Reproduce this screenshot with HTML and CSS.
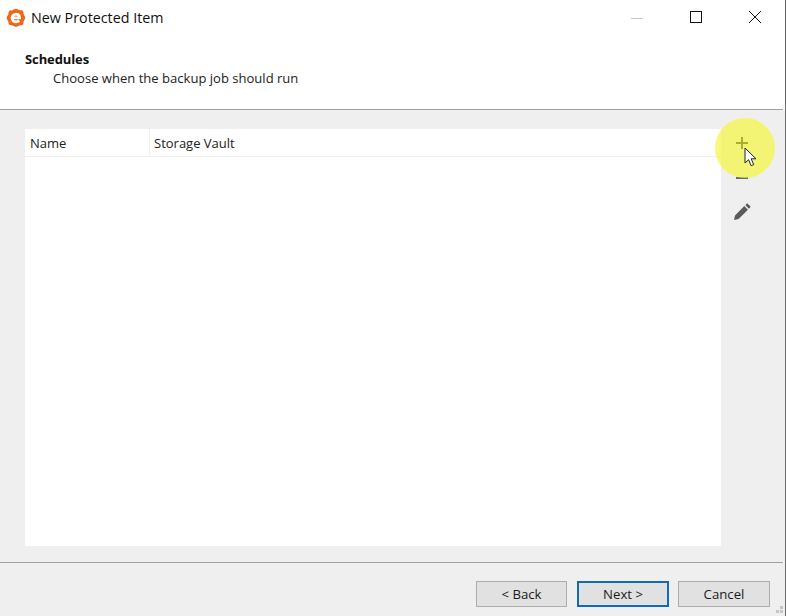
FILE: index.html
```html
<!DOCTYPE html>
<html lang="en">
<head>
<meta charset="utf-8">
<title>New Protected Item</title>
<link rel="stylesheet" href="styles.css">
</head>
<body>
<div class="window">
  <header class="titlebar">
    <svg class="app-icon" width="20" height="20" viewBox="0 0 20 20">
      <path fill="#ee661a" d="M10 .8c1.500 0 2.300 1 3.300 1.300 1.200.3 2.500-.1 3.500.8.900.9.500 2.200.9 3.300.3 1 1.500 2 1.500 3.600s-1.100 2.500-1.500 3.600c-.4 1.100 0 2.400-.9 3.300-1 .9-2.300.4-3.500.8-1 .3-1.800 1.300-3.300 1.300s-2.400-1-3.500-1.300c-1.100-.3-2.300 0-3.200-.8-1-.9-.6-2.200-1-3.300C1.900 12.400.7 11.500.7 10s1.200-2.500 1.600-3.700c.4-1.100 0-2.400 1-3.300.9-.9 2.200-.5 3.200-.8C7.600 1.800 8.500.8 10 .8z"/>
      <path fill="none" stroke="#fff" stroke-width="2.800" d="M6 9.900h7.600c0-2.400-1.600-3.800-3.600-3.800-2.200 0-3.900 1.700-3.900 3.900s1.700 3.900 3.900 3.900c1.300 0 2.300-.4 3.200-1.300"/>
    </svg>
    <span class="title">New Protected Item</span>
    <div class="caption-buttons">
      <svg class="cap-min" width="14" height="14" viewBox="0 0 14 14"><path d="M1 8.500h12" stroke="#c8c8c8" stroke-width="1"/></svg>
      <svg class="cap-max" width="14" height="14" viewBox="0 0 14 14"><rect x="1.500" y="1.500" width="11" height="11" fill="none" stroke="#111" stroke-width="1"/></svg>
      <svg class="cap-close" width="14" height="14" viewBox="0 0 14 14"><path d="M1 1l12 12M13 1L1 13" stroke="#111" stroke-width="1" fill="none"/></svg>
    </div>
  </header>
  <section class="heading">
    <h1 class="heading-title">Schedules</h1>
    <p class="heading-sub">Choose when the backup job should run</p>
  </section>
  <div class="rule"></div>
  <main class="content">
    <div class="table">
      <div class="table-head">
        <div class="col col-name">Name</div>
        <div class="col col-vault">Storage Vault</div>
      </div>
    </div>
    <div class="tools">
      <button class="tool" aria-label="Add">
        <svg width="14" height="14" viewBox="0 0 14 14"><path d="M7 1v12M1 7h12" stroke="#000" stroke-width="2" shape-rendering="crispEdges"/></svg>
      </button>
      <button class="tool" aria-label="Remove">
        <svg width="14" height="14" viewBox="0 0 14 14"><path d="M1 7h12" stroke="#5a5a5a" stroke-width="1.800"/></svg>
      </button>
      <button class="tool" aria-label="Edit">
        <svg width="18" height="18" viewBox="0 0 18 18"><path fill="#5a5a5a" d="M1 17l1-4.600L11.300 3.100l3.600 3.600L5.600 16zM12.300 2.100l1.200-1.200c.4-.4 1-.4 1.400 0l2.200 2.200c.4.400.4 1 0 1.400l-1.200 1.200z"/></svg>
      </button>
    </div>
  </main>
  <div class="rule"></div>
  <footer class="footer">
    <button class="btn">&lt; Back</button>
    <button class="btn btn-primary">Next &gt;</button>
    <button class="btn btn-cancel">Cancel</button>
  </footer>
  <svg class="grip" width="10" height="10" viewBox="0 0 10 10"><path fill="#c4c4c4" d="M6 0h3v3H6zM2 4h3v3H2zM6 4h3v3H6z"/></svg>
  <div class="highlight"></div>
  <svg class="cursor" width="14" height="21" viewBox="0 0 14 21"><path d="M1 1v15l3.600-3.300 2.500 6 2.600-1.100-2.500-5.800H12z" fill="#fff" stroke="#222" stroke-width="1"/></svg>
</div>
</body>
</html>
```
FILE: styles.css
```css
* { box-sizing: border-box; }
html, body { margin: 0; padding: 0; }
body {
  width: 786px;
  height: 616px;
  overflow: hidden;
  background: #fff;
  font-family: "Open Sans", "Noto Sans", sans-serif;
  font-size: 13px;
  color: #1a1a1a;
}
.window {
  position: relative;
  width: 786px;
  height: 616px;
  display: flex;
  flex-direction: column;
  background: #fff;
  border-right: 1px solid #6a6a6a;
}
.titlebar {
  height: 34px;
  display: flex;
  align-items: center;
  padding-left: 6px;
  flex: none;
}
.app-icon { margin: 2px 5px 0 0; flex: none; }
.title { font-size: 14.3px; color: #111; }
.caption-buttons {
  margin-left: auto;
  display: flex;
  align-items: center;
  gap: 45px;
  padding-right: 23px;
  height: 34px;
}
.heading {
  flex: none;
  height: 75px;
  padding: 16px 0 0 25px;
}
.heading-title {
  margin: 0;
  font-size: 13px;
  font-weight: 700;
  line-height: 18px;
  letter-spacing: -0.1px;
  color: #111;
}
.heading-sub {
  margin: 1px 0 0 28px;
  font-size: 13.05px;
  line-height: 18px;
  color: #222;
}
.rule {
  flex: none;
  width: 783px;
  height: 1px;
  background: #a0a0a0;
}
.content {
  flex: 1;
  display: flex;
  background: #efefef;
  padding: 19px 0 16px 25px;
}
.table {
  width: 696px;
  background: #fff;
}
.table-head {
  display: flex;
  height: 28px;
  border-bottom: 1px solid #efefef;
  line-height: 29px;
}
.col { padding-left: 5px; color: #222; }
.col-name { width: 125px; border-right: 1px solid #efefef; }
.col-vault { padding-left: 4px; }
.tools {
  display: flex;
  flex-direction: column;
  align-items: center;
  gap: 6.500px;
  width: 42px;
}
.tool {
  width: 42px;
  height: 28px;
  padding: 0;
  border: 0;
  background: none;
  display: flex;
  align-items: center;
  justify-content: center;
}
.footer {
  flex: none;
  height: 53px;
  background: #efefef;
  display: flex;
  justify-content: flex-end;
  padding: 18px 15px 0 0;
  gap: 9px;
}
.btn {
  width: 91px;
  height: 26px;
  padding: 0;
  background: #e1e1e1;
  border: 1px solid #adadad;
  font-family: inherit;
  font-size: 13.2px;
  color: #1a1a1a;
}
.btn-primary {
  width: 92px;
  margin-left: 1px;
  border: 2px solid #0f6cb5;
}
.btn-cancel { width: 92px; }
.grip { position: absolute; right: 1px; bottom: 0; }
.highlight {
  position: absolute;
  left: 715px;
  top: 118px;
  width: 60px;
  height: 60px;
  border-radius: 50%;
  background: rgba(247, 247, 64, 0.7);
}
.cursor { position: absolute; left: 744px; top: 147px; }
```
